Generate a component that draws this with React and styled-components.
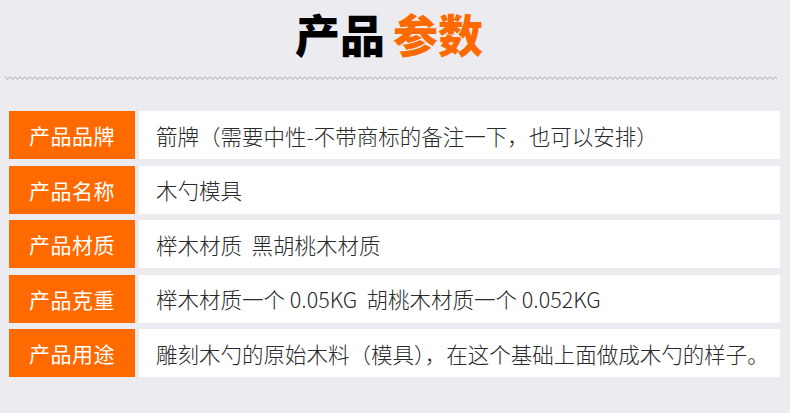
import styled, {createGlobalStyle} from "styled-components";

const GlobalStyle = createGlobalStyle`
  html, body {
    margin: 0;
    padding: 0;
    background: #ebebf0;
  }
  body {
    font-family: "Noto Sans CJK SC", "Noto Sans", sans-serif;
  }
`;

const params = [
  {label: '产品品牌', value: '箭牌（需要中性-不带商标的备注一下，也可以安排）'},
  {label: '产品名称', value: '木勺模具'},
  {label: '产品材质', value: '榉木材质  黑胡桃木材质'},
  {label: '产品克重', value: '榉木材质一个 0.05KG  胡桃木材质一个 0.052KG'},
  {label: '产品用途', value: '雕刻木勺的原始木料（模具），在这个基础上面做成木勺的样子。'},
];

const Page = styled.div`
   width: 790px;
   height: 413px;
   overflow: hidden;
   background: #ebebf0;
`;
const Header = styled.div`
   box-sizing: border-box;
   height: 75px;
   display: flex;
   justify-content: center;
   align-items: flex-start;
   padding: 11px 12px 0 0;
`;
const Title = styled.h1`
   margin: 0;
   font-size: 45px;
   font-weight: 900;
   line-height: 1;
   color: #000;
   display: flex;
   gap: 8px;
`;
const Accent = styled.span`
   color: #ff6a00;
`;
const Divider = styled.svg`
   display: block;
   margin-left: 5px;
   width: 772px;
   height: 6px;
`;
const Table = styled.div`
   display: flex;
   flex-direction: column;
   gap: 6.5px;
   padding: 30px 10px 0 9px;
`;
const Row = styled.div`
   display: grid;
   grid-template-columns: 126px 1fr;
   column-gap: 4px;
   height: 48px;
`;
const Label = styled.div`
   background: #ff6a00;
   color: #fff;
   font-size: 21px;
   display: flex;
   align-items: center;
   justify-content: center;
   letter-spacing: 0.5px;
`;
const Value = styled.div`
   background: #fff;
   color: #2a2a2a;
   font-size: 21.5px;
   font-weight: 300;
   display: flex;
   align-items: center;
   padding-left: 17px;
   white-space: pre;
`;

function ZigZag() {
  return (
    <Divider viewBox="0 0 772 6">
      <defs>
        <pattern id="zz" width="5" height="6" patternUnits="userSpaceOnUse">
          <polyline points="0,1.5 2.5,4.5 5,1.5" fill="none" stroke="#a0a0a8" strokeWidth="0.9"/>
        </pattern>
      </defs>
      <rect width="772" height="6" fill="url(#zz)"/>
    </Divider>
  )
}

export default function App() {
  return (
    <Page>
      <GlobalStyle/>
      <Header>
        <Title><span>产品</span><Accent>参数</Accent></Title>
      </Header>
      <ZigZag/>
      <Table>
        {params.map(p => (
          <Row key={p.label}>
            <Label>{p.label}</Label>
            <Value>{p.value}</Value>
          </Row>
        ))}
      </Table>
    </Page>
  )
}
